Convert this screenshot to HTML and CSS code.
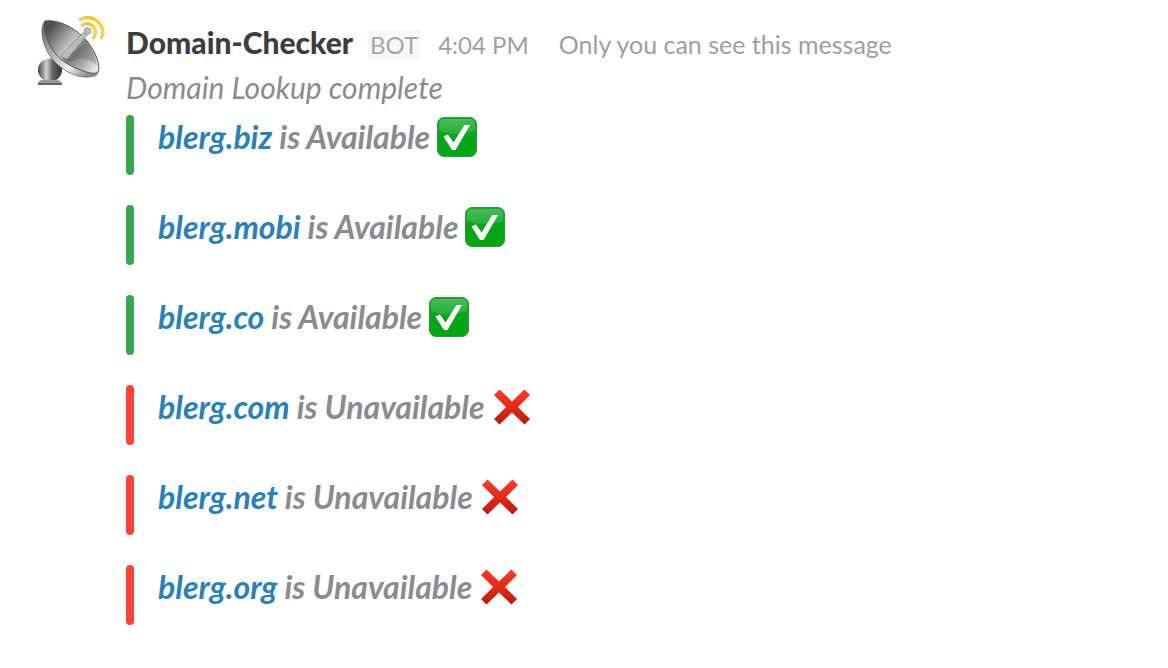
FILE: index.html
```
<!DOCTYPE html>
<html lang="en">
<head>
    <meta charset="UTF-8">
    <meta name="viewport" content="width=device-width, initial-scale=1.0">
    <title>Domain-Checker</title>
    <link rel="stylesheet" href="styles.css">
</head>
<body>
    <!-- Shared emoji -->
    <svg class="defs" width="0" height="0" aria-hidden="true">
        <defs>
            <linearGradient id="green" x1="0" y1="0" x2="0" y2="1">
                <stop offset="0" stop-color="#19a62f"/>
                <stop offset="0.5" stop-color="#05a51a"/>
                <stop offset="1" stop-color="#02a814"/>
            </linearGradient>
            <linearGradient id="gloss" x1="0" y1="0" x2="0" y2="1">
                <stop offset="0" stop-color="#45bd58"/>
                <stop offset="1" stop-color="#26ae3a"/>
            </linearGradient>
            <linearGradient id="red" x1="0" y1="0" x2="0" y2="1">
                <stop offset="0" stop-color="#fb3a23"/>
                <stop offset="0.55" stop-color="#df2916"/>
                <stop offset="1" stop-color="#b51b10"/>
            </linearGradient>
            <symbol id="check" viewBox="0 0 40 40">
                <rect x="0.5" y="0.5" width="39" height="39" rx="6.5" fill="url(#green)" stroke="#2d9c3e"/>
                <path d="M7 2h26q5 0 5 5v7q-8 3-18 3T2 14V7q0-5 5-5z" fill="url(#gloss)"/>
                <path d="M6.5 19.5l4.500-2 5.500 8L27.500 8H33L18.500 33h-3.500z" fill="#fff"/>
            </symbol>
            <symbol id="cross" viewBox="0 0 40 40">
                <path d="M7.5 2.500L20 14.500 32.500 2.500 38 8 26 20 38 32 32.500 37.500 20 25.500 7.500 37.500 2 32 14 20 2 8z" fill="url(#red)"/>
            </symbol>
        </defs>
    </svg>

    <div class="message">
        <svg class="avatar" viewBox="0 0 72 72" role="img" aria-label="Satellite antenna">
            <defs>
                <linearGradient id="dish" x1="0.05" y1="0.2" x2="0.95" y2="0.9">
                    <stop offset="0" stop-color="#505050"/>
                    <stop offset="0.25" stop-color="#949494"/>
                    <stop offset="0.42" stop-color="#c4c4c4"/>
                    <stop offset="0.58" stop-color="#808080"/>
                    <stop offset="0.78" stop-color="#aaa"/>
                    <stop offset="1" stop-color="#e8e8e8"/>
                </linearGradient>
                <linearGradient id="rim" x1="0" y1="0" x2="0.8" y2="1">
                    <stop offset="0" stop-color="#555"/>
                    <stop offset="0.4" stop-color="#aaa"/>
                    <stop offset="0.75" stop-color="#eee"/>
                    <stop offset="1" stop-color="#888"/>
                </linearGradient>
                <linearGradient id="ball" x1="0" y1="0" x2="1" y2="0">
                    <stop offset="0" stop-color="#444"/>
                    <stop offset="0.35" stop-color="#d0d0d0"/>
                    <stop offset="0.6" stop-color="#666"/>
                    <stop offset="1" stop-color="#333"/>
                </linearGradient>
                <linearGradient id="wave" x1="0" y1="0" x2="1" y2="0">
                    <stop offset="0" stop-color="#f8c98e"/>
                    <stop offset="0.5" stop-color="#eec51c"/>
                    <stop offset="1" stop-color="#f3d560"/>
                </linearGradient>
            </defs>
            <ellipse cx="16" cy="54" rx="12" ry="11.500" fill="url(#ball)"/>
            <path d="M4 68q0-4 5-4h14q4 0 5 4z" fill="#999"/>
            <path d="M4 67h24v2H4z" fill="#666"/>
            <path d="M11 5C5 12 8 32 20 45 31 57 48 64 60 60 63 59 64 58 64 55z" fill="url(#rim)" stroke="#666" stroke-width="0.8"/>
            <path d="M11 5C23 3 41 11 53 25 62 36 67 50 64 56 61 60 41 54 28 44 13 32 9 13 11 5z" fill="url(#dish)" stroke="#555" stroke-width="1"/>
            <path d="M28 43L53 27Q62 39 63 50 55 41 44 43 37 46 31 46z" fill="#444" opacity="0.25"/>
            <path d="M26 40L51 15 54 18 33 43z" fill="#bbb" stroke="#888" stroke-width="0.6"/>
            <circle cx="53.500" cy="15" r="3.500" fill="#bbb" stroke="#888" stroke-width="0.6"/>
            <g fill="none" stroke="url(#wave)" stroke-width="3.500">
                <path d="M47 10Q54 5 59 10T59 23"/>
                <path d="M45 4Q56-2 64 6T67 23"/>
            </g>
        </svg>
        <div class="content">
            <div class="header">
                <span class="name">Domain-Checker</span>
                <span class="bot">BOT</span>
                <span class="time">4:04 PM</span>
                <span class="notice">Only you can see this message</span>
            </div>
            <p class="summary">Domain Lookup complete</p>
            <ul class="results">
                <li class="result available">
                    <span><a href="http://blerg.biz">blerg.biz</a> is Available</span>
                    <svg class="emoji"><use href="#check"/></svg>
                </li>
                <li class="result available">
                    <span><a href="http://blerg.mobi">blerg.mobi</a> is Available</span>
                    <svg class="emoji"><use href="#check"/></svg>
                </li>
                <li class="result available">
                    <span><a href="http://blerg.co">blerg.co</a> is Available</span>
                    <svg class="emoji"><use href="#check"/></svg>
                </li>
                <li class="result unavailable">
                    <span><a href="http://blerg.com">blerg.com</a> is Unavailable</span>
                    <svg class="emoji"><use href="#cross"/></svg>
                </li>
                <li class="result unavailable">
                    <span><a href="http://blerg.net">blerg.net</a> is Unavailable</span>
                    <svg class="emoji"><use href="#cross"/></svg>
                </li>
                <li class="result unavailable">
                    <span><a href="http://blerg.org">blerg.org</a> is Unavailable</span>
                    <svg class="emoji"><use href="#cross"/></svg>
                </li>
            </ul>
        </div>
    </div>
</body>
</html>
```
FILE: styles.css
```
body {
    margin: 0;
    background: #fff;
    color: #8b8a91;
    font-family: Lato, sans-serif;
    font-size: 30px;
}
.defs {
    display: block;
}
.message {
    display: flex;
    gap: 20px;
    padding: 16px 34px;
}
.avatar {
    flex: none;
    width: 72px;
    height: 72px;
}
.content {
    flex: 1;
    padding-top: 4px;
}
.header {
    display: flex;
    align-items: baseline;
    line-height: 44px;
    font-size: 25px;
    color: #9e9ea6;
}
.name {
    color: #3d3c40;
    font-size: 30px;
    font-weight: 900;
}
.bot {
    margin: 0 18px 0 15px;
    padding: 0 2px;
    background: #f7f7f7;
    color: #a8a8a8;
    font-size: 24px;
    line-height: 30px;
}
.time {
    font-size: 24px;
}
.notice {
    margin-left: 30px;
}
.summary {
    margin: 0;
    font-style: italic;
    line-height: 40px;
}
.results {
    display: flex;
    flex-direction: column;
    gap: 30px;
    margin: 8px 0 0;
    padding: 0;
    list-style: none;
}
.result {
    display: flex;
    align-items: flex-start;
    gap: 7px;
    font-size: 32px;
    font-style: italic;
    font-weight: bold;
    line-height: 44px;
}
.result::before {
    content: "";
    width: 8px;
    height: 60px;
    margin-right: 17px;
    border-radius: 4px;
}
.available::before {
    background: #37a64f;
}
.unavailable::before {
    background: #f94336;
}
.result a {
    color: #2a80b9;
    text-decoration: none;
}
.result a:hover {
    text-decoration: underline;
}
.emoji {
    width: 40px;
    height: 40px;
    margin-top: 2px;
}
```
